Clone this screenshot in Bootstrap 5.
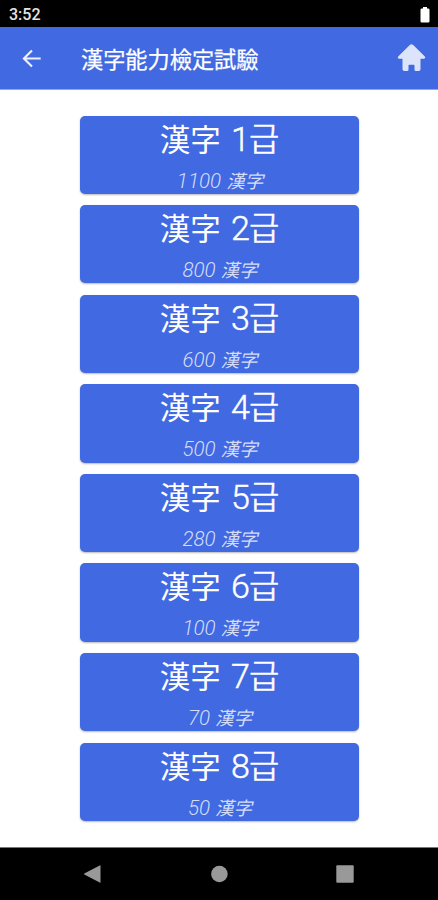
<!DOCTYPE html>
<html lang="ko">
<head>
<meta charset="utf-8">
<meta name="viewport" content="width=device-width, initial-scale=1">
<title>漢字能力檢定試驗</title>
<link href="https://cdn.jsdelivr.net/npm/bootstrap@5.3.0/dist/css/bootstrap.min.css" rel="stylesheet">
<style>
body{height:900px;font-family:Roboto,"Noto Sans CJK KR",sans-serif;overflow:hidden}
.status-bar{height:27px;padding:2px 8px 0 9px;font-size:16px;line-height:1;font-weight:500;color:#e4e4e4}
.app-bar{height:63px;background:#4169e1;border-bottom:1px solid #8fa6ee;padding:0 12px 0 22px}
.app-title{font-size:22.2px;line-height:32px;font-weight:400;font-family:"Noto Sans CJK KR",sans-serif;margin-left:39px;-webkit-text-stroke:.25px #fff}
.levels{padding-top:25.5px;gap:11.2px}
.level{width:279px;height:78.4px;padding:0;border:0;border-radius:5px;background:#4169e1;color:#fff;box-shadow:0 1px 2px rgba(0,0,0,.28)}
.level:hover{background:#4169e1;color:#fff}
.level-name{font-size:34px;line-height:46px;height:46px;white-space:nowrap;font-weight:400;word-spacing:2px;padding-left:1px}
.level-name .hanja{font-size:30.5px}
.level-name .digit{font-weight:300;letter-spacing:-1px;-webkit-text-stroke:.45px #fff}
.level-name .hangul{font-size:33px;font-weight:300;-webkit-text-stroke:.6px #fff}
.level-count{font-size:20.6px;line-height:32px;height:32px;font-weight:300;font-style:italic;color:#d5ddf8;margin-top:3px;white-space:nowrap;padding-left:2px}
.level-count .hanja{font-size:18.5px;font-weight:400}
.system-nav{height:53px;border-top:1px solid #777;padding:0 84px 0 83px}
</style>
</head>
<body class="d-flex flex-column bg-white">
<div class="status-bar bg-black d-flex align-items-center justify-content-between flex-shrink-0">
<span>3:52</span>
<svg width="10" height="16" viewBox="0 0 10 16" fill="#fff"><path d="M3 0h4v1.500h1.200q1.300 0 1.300 1.300v11.400q0 1.300-1.300 1.300H1.800Q.5 15.500.5 14.200V2.800Q.5 1.500 1.800 1.500H3z"/></svg>
</div>
<header class="app-bar d-flex align-items-center text-white flex-shrink-0">
<svg width="20" height="20" viewBox="0 0 20 20" fill="none" stroke="#edf1ff" stroke-width="2.1"><path d="M18.700 10.500H2.500M10 2.400 1.900 10.500l8.100 8.100"/></svg>
<h1 class="app-title mb-0">漢字能力檢定試驗</h1>
<svg class="ms-auto" width="29" height="28" viewBox="0 0 29 28" fill="#dce4fc"><path d="M12.800.9q1.700-1.500 3.400 0L27.600 12.200q1.600 1.900-.6 2.600H23.500V25.200q0 1.800-1.800 1.800h-2.900q-1.300 0-1.300-1.300V21.500q0-.7-.7-.7h-4.600q-.7 0-.7.7v4.200q0 1.300-1.300 1.300H7.300q-1.800 0-1.800-1.800V14.800H2q-2.200-.7-.6-2.600z"/></svg>
</header>
<main class="levels flex-grow-1 d-flex flex-column align-items-center">
<button class="level btn d-block"><div class="level-name"><span class="hanja">漢字</span> <span class="digit">1</span><span class="hangul">급</span></div><div class="level-count">1100 <span class="hanja">漢字</span></div></button>
<button class="level btn d-block"><div class="level-name"><span class="hanja">漢字</span> <span class="digit">2</span><span class="hangul">급</span></div><div class="level-count">800 <span class="hanja">漢字</span></div></button>
<button class="level btn d-block"><div class="level-name"><span class="hanja">漢字</span> <span class="digit">3</span><span class="hangul">급</span></div><div class="level-count">600 <span class="hanja">漢字</span></div></button>
<button class="level btn d-block"><div class="level-name"><span class="hanja">漢字</span> <span class="digit">4</span><span class="hangul">급</span></div><div class="level-count">500 <span class="hanja">漢字</span></div></button>
<button class="level btn d-block"><div class="level-name"><span class="hanja">漢字</span> <span class="digit">5</span><span class="hangul">급</span></div><div class="level-count">280 <span class="hanja">漢字</span></div></button>
<button class="level btn d-block"><div class="level-name"><span class="hanja">漢字</span> <span class="digit">6</span><span class="hangul">급</span></div><div class="level-count">100 <span class="hanja">漢字</span></div></button>
<button class="level btn d-block"><div class="level-name"><span class="hanja">漢字</span> <span class="digit">7</span><span class="hangul">급</span></div><div class="level-count">70 <span class="hanja">漢字</span></div></button>
<button class="level btn d-block"><div class="level-name"><span class="hanja">漢字</span> <span class="digit">8</span><span class="hangul">급</span></div><div class="level-count">50 <span class="hanja">漢字</span></div></button>
</main>
<nav class="system-nav bg-black d-flex align-items-center justify-content-between flex-shrink-0">
<svg width="18" height="18" viewBox="0 0 18 18" fill="#999"><path d="M17.500.8v16.400q0 .8-.8.400L1.300 9.500q-.7-.5 0-1L16.700.4q.8-.4.8.4z"/></svg>
<svg width="18" height="18" viewBox="0 0 18 18" fill="#999"><circle cx="9.400" cy="9" r="8.300"/></svg>
<svg width="18" height="18" viewBox="0 0 18 18" fill="#999"><rect x=".3" y=".3" width="17.400" height="17.400" rx="1"/></svg>
</nav>
<script src="https://cdn.jsdelivr.net/npm/bootstrap@5.3.0/dist/js/bootstrap.bundle.min.js"></script>
</body>
</html>
